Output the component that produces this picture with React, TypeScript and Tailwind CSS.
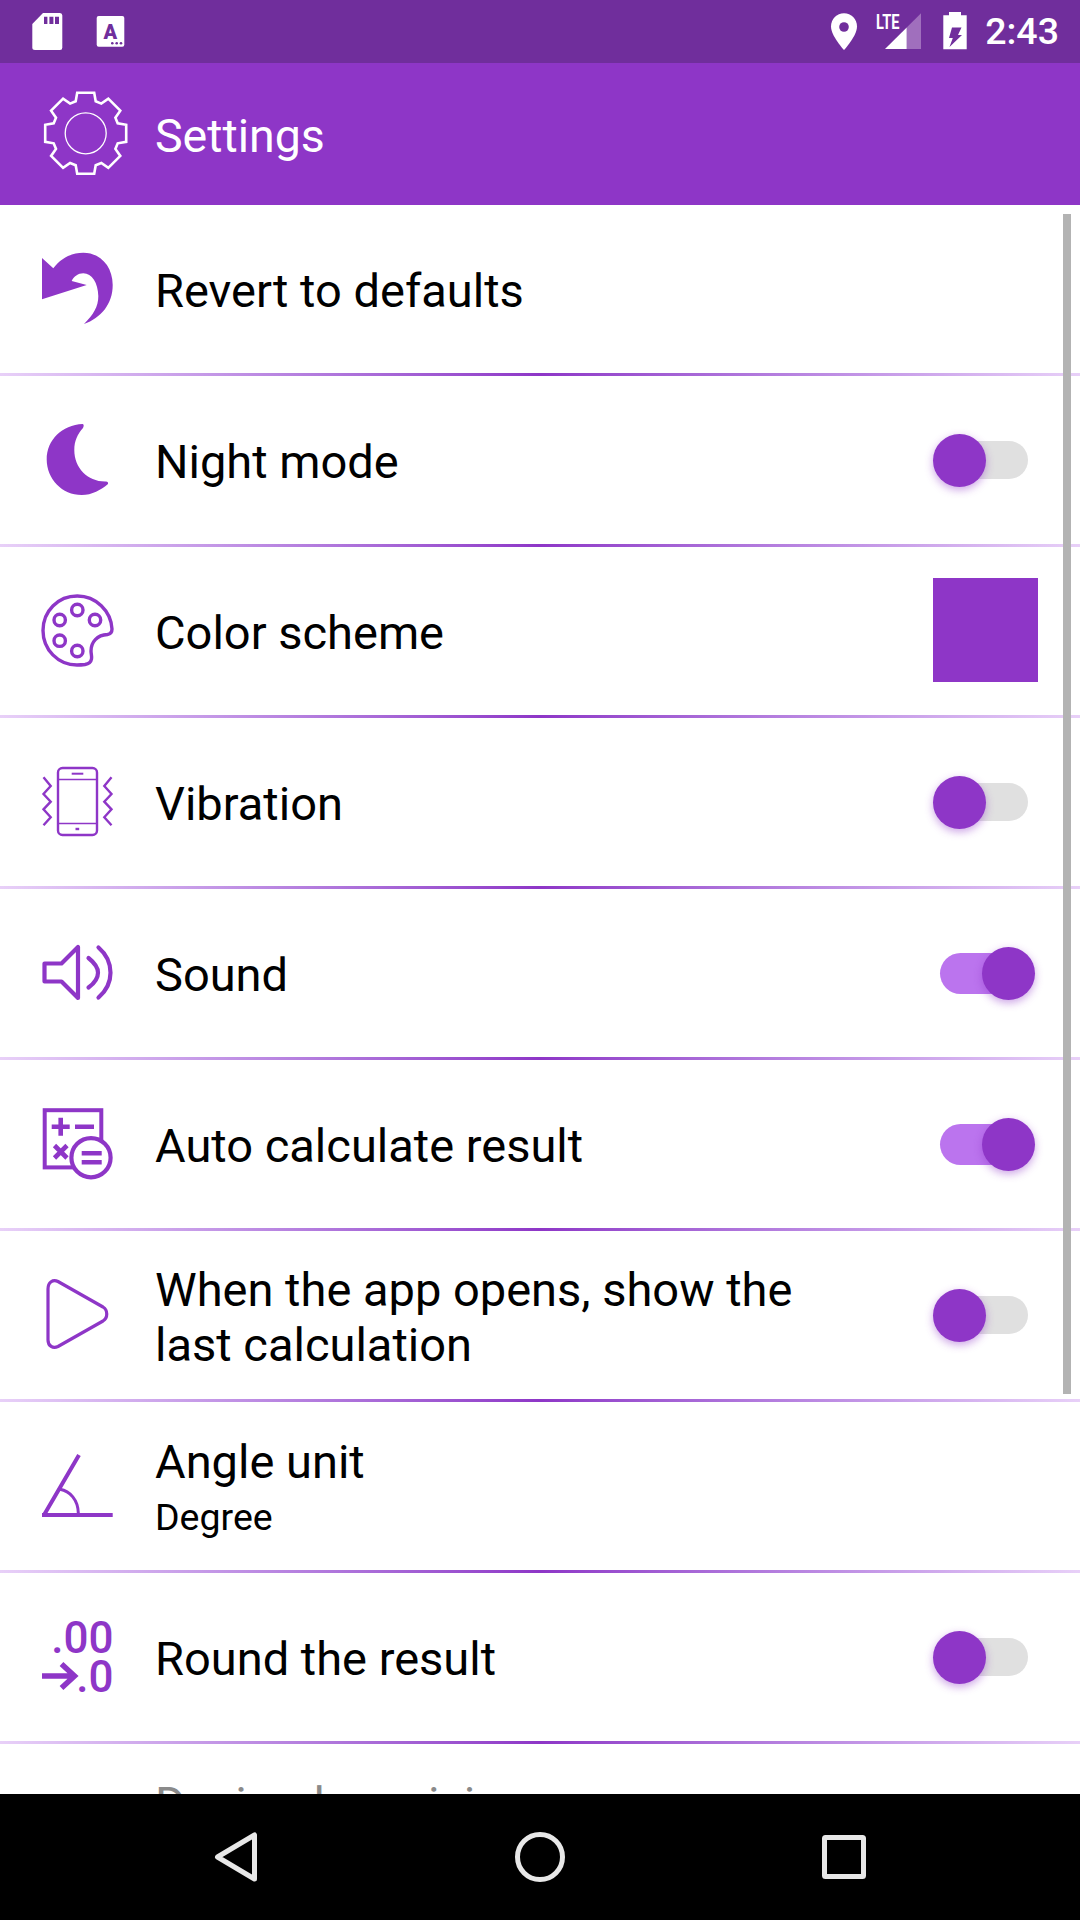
import type { ReactNode } from "react";

const PURPLE = "#8e36c7";

// gear outline for the toolbar icon, 8 teeth around (85.7, 133.3)
const gearPoints = Array.from({ length: 8 })
  .flatMap((_, i) => {
    const a = (i * Math.PI) / 4;
    const local = [
      [-10, 32],
      [-8.5, 40.5],
      [8.5, 40.5],
      [10, 32],
    ];
    return local.map(([x, y]) => {
      const px = 85.7 + x * Math.cos(a) + y * Math.sin(a);
      const py = 133.3 + x * Math.sin(a) - y * Math.cos(a);
      return `${px.toFixed(1)},${py.toFixed(1)}`;
    });
  })
  .join(" ");

function Box({ y, children }: { y: number; children: ReactNode }) {
  return (
    <svg width="80" height="80" viewBox={`36 ${y} 80 80`} className="shrink-0 overflow-visible">
      {children}
    </svg>
  );
}

function RevertIcon() {
  return (
    <Box y={249}>
      <path
        d="M42 258 L53.3 268.3 C61 258 72 252.7 83.3 252.7 C100 252.7 112.7 266 112.7 285 C112.7 304 101 318 84 324 C93.5 315 98.5 306 98.3 296 C98 283 92 273.3 83.3 273.3 C78 273.3 74 276.5 71.7 281 L86.7 285 L42 299.3 Z"
        fill={PURPLE}
      />
    </Box>
  );
}

function MoonIcon() {
  return (
    <Box y={420}>
      <path
        d="M82.7 424 C62 425 46.7 440 46.7 459.5 C46.7 479 62 495 81.7 495 C92 495 101 490 108 484 Q108.5 481.5 106 481.5 C88 482 74.3 468 74.3 450 C74.3 441 77.5 434 83 428 Q84.5 424.5 82.7 424 Z"
        fill={PURPLE}
      />
    </Box>
  );
}

function PaletteIcon() {
  return (
    <Box y={591}>
      <g fill="none" stroke={PURPLE} strokeWidth="3.4">
        <path d="M77.3 596 C96 596 111 611 112 629 C112 632 110.5 634 107.5 634.5 C97 635 91 642 91 651 C91 654 92 656 91.5 659 C91 662 88 664 85 664.5 C81 665 79 665 77 665 C58 665 43 649.5 43 630.5 C43 611 58 596 77.3 596 Z" />
        <circle cx="77.3" cy="610" r="5.7" />
        <circle cx="95" cy="620" r="5.7" />
        <circle cx="59.7" cy="620" r="5.7" />
        <circle cx="59.7" cy="640.7" r="5.7" />
        <circle cx="77.3" cy="651" r="5.7" />
      </g>
    </Box>
  );
}

function VibrationIcon() {
  return (
    <Box y={762}>
      <g fill="none" stroke={PURPLE} strokeWidth="2.4">
        <rect x="58" y="768" width="39" height="67" rx="4.5" strokeWidth="2.4" />
        <path d="M58 779.5 H97 M58 823.5 H97" strokeWidth="1.5" />
        <path d="M71.7 773.7 H83.3" strokeWidth="2" />
        <path d="M75.5 829 H79.2" strokeWidth="2.4" />
        <path d="M43.5 777.3 L50.7 786 L43.5 794 L50.7 801.7 L43.5 809.3 L50.7 817.3 L43.5 825.3" />
        <path d="M111.5 777.3 L104.3 786 L111.5 794 L104.3 801.7 L111.5 809.3 L104.3 817.3 L111.5 825.3" />
      </g>
    </Box>
  );
}

function SoundIcon() {
  return (
    <Box y={933}>
      <g fill="none" stroke={PURPLE} strokeWidth="4.2" strokeLinejoin="round" strokeLinecap="round">
        <path d="M44.5 963.5 H61.5 L78 947 V998 L61.5 981.5 H44.5 Z" />
        <path d="M88.5 958 C96 964 98 968 98 972.7 C98 977 96 982 88.5 987.5" />
        <path d="M98.5 947.5 C106 954 110.5 962 110.5 972.7 C110.5 983 106 991 98.5 997.5" />
      </g>
    </Box>
  );
}

function CalcIcon() {
  return (
    <Box y={1104}>
      <rect x="44.7" y="1110.2" width="56.6" height="57.2" fill="none" stroke={PURPLE} strokeWidth="4" />
      <path d="M51.7 1126.7 H69.7 M60.7 1117.7 V1135.7 M75 1126.7 H94 M54.5 1145.5 L67 1158 M67 1145.5 L54.5 1158" stroke={PURPLE} strokeWidth="4.6" fill="none" />
      <circle cx="91" cy="1157.7" r="19.6" fill="#fff" stroke={PURPLE} strokeWidth="4.2" />
      <path d="M81.7 1153.3 H101.7 M81.7 1162.3 H101.7" stroke={PURPLE} strokeWidth="4.6" />
    </Box>
  );
}

function PlayIcon() {
  return (
    <Box y={1275}>
      <path
        d="M48 1289 C48 1282 53 1279 58 1281.5 L103 1307 C108 1310 108 1318 103 1321 L58 1346.5 C53 1349 48 1346 48 1340 Z"
        fill="none"
        stroke={PURPLE}
        strokeWidth="3.2"
      />
    </Box>
  );
}

function AngleIcon() {
  return (
    <Box y={1446}>
      <path d="M42 1515 H112.7 M44 1515 L79 1455" fill="none" stroke={PURPLE} strokeWidth="4" />
      <path d="M60 1489.3 C70 1491 78 1500 78.3 1513" fill="none" stroke={PURPLE} strokeWidth="3" />
    </Box>
  );
}

function RoundIcon() {
  return (
    <Box y={1617}>
      <g fill={PURPLE} textAnchor="end" fontFamily="Roboto, sans-serif" fontSize="44" fontWeight="500">
        <text x="113.5" y="1653">.00</text>
        <text x="113.5" y="1691.5">.0</text>
      </g>
      <path d="M42 1676 H74 M61.5 1664 L74.5 1676 L61.5 1688" fill="none" stroke={PURPLE} strokeWidth="5.5" />
    </Box>
  );
}

function Toggle({ on }: { on?: boolean }) {
  return (
    <div className="relative w-[102px] h-[53px] flex items-center justify-center">
      <div className={on ? "w-[88px] h-[41px] rounded-full bg-[#bb74ee]" : "w-[88px] h-[38px] rounded-full bg-[#e0e0e0]"} />
      <div
        className={
          on
            ? "absolute right-0 top-0 w-[53px] h-[53px] rounded-full bg-[#8e36c7] shadow-[0_3px_9px_rgba(142,54,199,0.45)]"
            : "absolute left-0 top-0 w-[53px] h-[53px] rounded-full bg-[#8e36c7] shadow-[0_3px_9px_rgba(142,54,199,0.45)]"
        }
      />
    </div>
  );
}

function Row({
  icon,
  title,
  sub,
  trailing,
  disabled,
}: {
  icon: ReactNode;
  title: ReactNode;
  sub?: string;
  trailing?: ReactNode;
  disabled?: boolean;
}) {
  return (
    <div>
      <div className="h-[168px] flex items-center pl-[36px] pr-[42px]">
        {icon}
        <div className="flex-1 ml-[39px] pt-[3px]">
          <div className={`max-w-[690px] text-[47px] leading-[55px] ${disabled ? "text-[#8a8a8a]" : "text-black"}`}>{title}</div>
          {sub && <div className="text-[37.5px] leading-[50px] mt-[3px] text-black">{sub}</div>}
        </div>
        <div className="w-[105px] shrink-0 flex items-center">{trailing}</div>
      </div>
      <div className="h-[3px] bg-gradient-to-r from-[#e8d0f8] via-[#8e36c7] to-[#e8d0f8]" />
    </div>
  );
}

function StatusBar() {
  return (
    <div className="h-[63px] shrink-0 bg-[#702e9c] flex items-center justify-between">
      <svg width="130" height="63" viewBox="0 0 130 63">
        <path d="M43 13 H60 Q62.3 13 62.3 15.5 V47.5 Q62.3 50 60 50 H35 Q32.3 50 32.3 47.5 V24 Z" fill="#fff" />
        <path d="M44 16.7 h3.4 v7.3 h-3.4 Z M49.4 16.7 h4 v7.3 h-4 Z M55 16.7 h4 v7.3 h-4 Z" fill="#702e9c" />
        <rect x="96.7" y="16" width="27.6" height="30.7" rx="2" fill="#fff" />
        <text x="110.3" y="39" textAnchor="middle" fontFamily="Roboto, sans-serif" fontWeight="900" fontSize="20" fill="#702e9c">A</text>
        <circle cx="112.3" cy="43.3" r="1.3" fill="#702e9c" />
        <circle cx="116.7" cy="43.3" r="1.3" fill="#702e9c" />
        <circle cx="121" cy="43.3" r="1.3" fill="#702e9c" />
      </svg>
      <div className="flex items-center">
        <svg width="150" height="63" viewBox="825 0 150 63">
          <path d="M844 13.3 C836.8 13.3 831 19.2 831 26.5 C831 36 844 50 844 50 C844 50 857 36 857 26.5 C857 19.2 851.2 13.3 844 13.3 Z" fill="#fff" />
          <circle cx="844" cy="27" r="4.8" fill="#702e9c" />
          <text x="876" y="29.3" fontFamily="Roboto, sans-serif" fontWeight="700" fontSize="21" textLength="23.5" lengthAdjust="spacingAndGlyphs" fill="#fff">LTE</text>
          <path d="M921 13.3 V49 H906.7 V27.5 Z" fill="#a06fbd" />
          <path d="M885 49 L906.7 27.5 V49 Z" fill="#fff" />
          <path d="M949 15.3 V12 H961 V15.3 H966.7 V49.3 H943.3 V15.3 Z" fill="#fff" />
          <path d="M952 27.5 H961.5 L958 35 H962 L949.5 47 L952.8 38 H949 Z" fill="#702e9c" />
        </svg>
        <span className="ml-[10px] mr-[21px] text-white text-[37.5px] font-medium leading-none">2:43</span>
      </div>
    </div>
  );
}

function NavBar() {
  return (
    <div className="h-[126px] shrink-0 bg-black flex items-center justify-center gap-[224px]">
      <svg width="80" height="80" viewBox="196 1817 80 80">
        <path d="M254.5 1835 V1879 L217.5 1857 Z" fill="none" stroke="#e8e8e8" strokeWidth="5" strokeLinejoin="round" />
      </svg>
      <svg width="80" height="80" viewBox="500 1817 80 80">
        <circle cx="540" cy="1857" r="22.5" fill="none" stroke="#e8e8e8" strokeWidth="5" />
      </svg>
      <svg width="80" height="80" viewBox="804 1817 80 80">
        <rect x="824.5" y="1837.5" width="39" height="39" rx="1" fill="none" stroke="#e8e8e8" strokeWidth="5" />
      </svg>
    </div>
  );
}

export default function App() {
  return (
    <div className="w-[1080px] h-[1920px] flex flex-col overflow-hidden bg-white font-['Roboto',sans-serif]">
      <StatusBar />
      <div className="h-[142px] shrink-0 bg-[#8e36c7] flex items-center pl-[36px]">
        <svg width="80" height="80" viewBox="36 94 80 80" className="shrink-0 overflow-visible">
          <polygon points={gearPoints} fill="none" stroke="#fff" strokeWidth="2.6" />
          <circle cx="85.7" cy="133.3" r="20.5" fill="none" stroke="#fff" strokeWidth="1.3" />
        </svg>
        <span className="ml-[39px] pt-[5px] text-white text-[46.5px]">Settings</span>
      </div>

      <div className="relative flex-1 min-h-0 overflow-hidden">
        <Row icon={<RevertIcon />} title="Revert to defaults" />
        <Row icon={<MoonIcon />} title="Night mode" trailing={<Toggle />} />
        <Row icon={<PaletteIcon />} title="Color scheme" trailing={<div className="w-[105px] h-[104px] mb-[2px] bg-[#8e36c7]" />} />
        <Row icon={<VibrationIcon />} title="Vibration" trailing={<Toggle />} />
        <Row icon={<SoundIcon />} title="Sound" trailing={<Toggle on />} />
        <Row icon={<CalcIcon />} title="Auto calculate result" trailing={<Toggle on />} />
        <Row icon={<PlayIcon />} title="When the app opens, show the last calculation" trailing={<Toggle />} />
        <Row icon={<AngleIcon />} title="Angle unit" sub="Degree" />
        <Row icon={<RoundIcon />} title="Round the result" trailing={<Toggle />} />
        <Row icon={<div className="w-[80px] h-[80px]" />} title="Decimal precision" sub={"\u00a0"} disabled />
        {/* scroll thumb */}
        <div className="absolute top-[9px] right-[9px] w-[8px] h-[1180px] bg-[#b3b3b3]" />
      </div>

      <NavBar />
    </div>
  );
}
